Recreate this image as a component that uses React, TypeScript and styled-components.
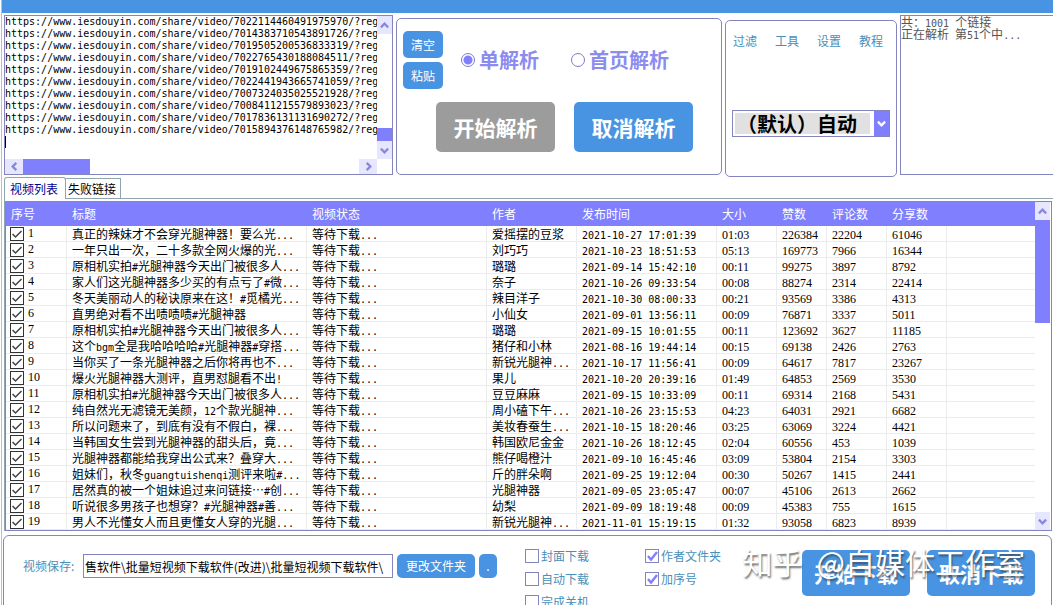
import React from "react";
import styled, { createGlobalStyle, css } from "styled-components";

const blue = "#4894e2";
const violet = "#8080ff";
const edge = "#8585bd";
const link = "#4a8fb8";
const cjk = '"Noto Sans CJK SC", sans-serif';
const mono = '"DejaVu Sans Mono", "Noto Sans CJK SC", monospace';

const GlobalStyle = createGlobalStyle`
  * { box-sizing: border-box; }
  body { margin: 0; background: #fff; color: #000; font: 12px/16px ${cjk}; overflow: hidden; }
  button, input, textarea, select { font-family: inherit; margin: 0; }
`;

const Window = styled.div`
  display: flex;
  flex-direction: column;
  height: 100vh;
  margin-left: 1px;
  border-left: 1px solid #b4bde6;
  overflow: hidden;
`;

const TitleBar = styled.header`
  flex: none;
  height: 13px;
  background: ${blue};
`;

const TopArea = styled.section`
  flex: none;
  display: grid;
  grid-template-columns: minmax(0, 389fr) minmax(0, 326fr) minmax(0, 172fr) minmax(0, 153fr);
  align-items: start;
  gap: 3px;
  padding: 2px 0 0 2px;
`;

const LinkBox = styled.div`
  display: grid;
  grid-template-columns: minmax(0, 1fr) 15px;
  grid-template-rows: 143px 15px;
  position: relative;
  border: 1px solid ${edge};
`;

const LinkText = styled.textarea`
  display: block;
  width: 100%;
  height: 100%;
  padding: 0;
  border: 0;
  outline: 0;
  resize: none;
  overflow: hidden;
  white-space: pre;
  font: 10px/12px ${mono};
  color: #000;
`;

const Caret = styled.span`
  position: absolute;
  left: 0;
  top: 120px;
  width: 1px;
  height: 12px;
  background: #000;
`;

const Track = styled.div<{ $row?: boolean }>`
  display: flex;
  flex-direction: ${(p) => (p.$row ? "row" : "column")};
  background: #fff;
`;

const ArrowButton = styled.button`
  flex: 0 0 18px;
  display: flex;
  align-items: center;
  justify-content: center;
  padding: 0;
  border: 0;
  background: #e6e6ff;
  color: #8888dd;
`;

const Thumb = styled.div<{ $size: number; $end?: boolean }>`
  flex: 0 0 ${(p) => p.$size}px;
  margin-top: ${(p) => (p.$end ? "auto" : 0)};
  background: ${violet};
`;

const Gap = styled.div`
  flex: 1;
`;

const Group = styled.div<{ $top: number }>`
  height: 157px;
  margin-top: ${(p) => p.$top}px;
  padding: 12px 6px;
  border: 1px solid ${edge};
  border-radius: 5px;
`;

const ParseGroup = styled(Group)`
  display: flex;
  flex-direction: column;
  gap: 13px;
`;

const ModeRow = styled.div`
  display: flex;
  align-items: center;
  gap: 18px;
`;

const Stack = styled.div`
  display: flex;
  flex-direction: column;
  gap: 4px;
`;

const Modes = styled.div`
  display: flex;
  gap: 32px;
`;

const ActionRow = styled.div`
  display: flex;
  gap: 19px;
  padding-left: 33px;
`;

const SmallButton = styled.button<{ $w: number; $h: number }>`
  flex: none;
  width: ${(p) => p.$w}px;
  height: ${(p) => p.$h}px;
  padding: 0;
  border: 0;
  border-radius: 5px;
  background: ${blue};
  color: #fff;
  font-size: 12px;
  line-height: 16px;
`;

const BigButton = styled.button<{ $w: number; $h: number; $off?: boolean }>`
  flex: none;
  width: ${(p) => p.$w}px;
  height: ${(p) => p.$h}px;
  padding: 0;
  border: 0;
  border-radius: 5px;
  background: ${(p) => (p.$off ? "#9c9c9c" : blue)};
  color: #fff;
  font-size: 21px;
  font-weight: 700;
  line-height: 24px;
  white-space: nowrap;
`;

const RadioLabel = styled.label`
  display: flex;
  align-items: center;
  gap: 4px;
  font-size: 20px;
  font-weight: 700;
  line-height: 24px;
  color: #8c8cf0;
  white-space: nowrap;
`;

const Radio = styled.input`
  appearance: none;
  flex: none;
  width: 14px;
  height: 14px;
  border: 1px solid #7c7ccc;
  border-radius: 50%;
  &:checked {
    background: radial-gradient(circle, ${violet} 0 4px, #fff 5px);
  }
`;

const ToolGroup = styled(Group)`
  display: flex;
  flex-direction: column;
  gap: 61px;
`;

const Menu = styled.nav`
  display: flex;
  gap: 18px;
  padding-left: 1px;
`;

const MenuLink = styled.a`
  color: ${link};
  text-decoration: none;
  white-space: nowrap;
`;

const Combo = styled.div`
  display: flex;
  height: 27px;
  border: 1px solid ${edge};
`;

const ComboSelect = styled.select`
  appearance: none;
  flex: 1;
  min-width: 0;
  margin: 2px 4px 2px 2px;
  padding: 0 0 0 2px;
  border: 0;
  border-radius: 0;
  background: #e1e1e1;
  color: #000;
  font-size: 20px;
  font-weight: 700;
  line-height: 21px;
`;

const ComboArrow = styled.span`
  flex: 0 0 15px;
  display: flex;
  align-items: center;
  justify-content: center;
  background: ${violet};
  color: #fff;
`;

const Log = styled.div`
  height: 160px;
  border: 1px solid ${edge};
  border-right: 0;
  line-height: 12px;
  color: #555;
  white-space: nowrap;
`;

const LogLine = styled.p`
  margin: 0;
`;

const Tabs = styled.div`
  flex: none;
  display: flex;
  align-items: flex-end;
  padding-left: 2px;
`;

const Tab = styled.button<{ $active?: boolean }>`
  padding: 0 4px 0 2px;
  height: 20px;
  border: 1px solid #8fa5b2;
  border-bottom: 0;
  border-left-width: 0;
  background: #fff;
  color: #000;
  font-size: 12px;
  line-height: 16px;
  ${(p) =>
    p.$active &&
    css`
      height: 22px;
      padding: 0 7px 0 5px;
      margin-bottom: -1px;
      border-left-width: 1px;
      border-radius: 3px 3px 0 0;
      color: #000090;
      z-index: 1;
    `}
`;

const TabPage = styled.section`
  flex: none;
  margin-left: 2px;
  padding-top: 2px;
  border: solid #8fa5b2;
  border-width: 1px 0 0 1px;
`;

const ListBox = styled.div`
  display: grid;
  grid-template-columns: minmax(0, 1fr) 15px;
  margin-right: 1px;
  padding-right: 1px;
  border: 1px solid ${edge};
`;

const Table = styled.table`
  width: 100%;
  table-layout: fixed;
  border-collapse: separate;
  border-spacing: 0;
`;

const Th = styled.th`
  height: 24px;
  padding: 0 0 0 5px;
  background: ${violet};
  color: #fff;
  font-weight: 400;
  text-align: left;
  line-height: 16px;
  white-space: nowrap;
`;

const Td = styled.td`
  height: 16px;
  padding: 0 0 0 5px;
  border: solid #ececec;
  border-width: 0 1px 1px 0;
  line-height: 15px;
  white-space: nowrap;
  overflow: hidden;
  &:last-child { border-right: 0; }
`;

const Half = styled.span`
  font: 10px/1px ${mono};
`;

const Digits = styled.span`
  font: 12px/1px "Liberation Serif", serif;
`;

const RowLabel = styled.label`
  display: flex;
  align-items: center;
  gap: 4px;
  margin-left: -1px;
  height: 15px;
`;

const tick = (p: { $dark?: boolean }) => (p.$dark ? "#444444" : violet);

const CheckWrap = styled.span<{ $size: number; $dark?: boolean }>`
  flex: none;
  display: grid;
  width: ${(p) => p.$size}px;
  height: ${(p) => p.$size}px;
  color: ${tick};
  > * { grid-area: 1 / 1; width: 100%; height: 100%; }
  svg { pointer-events: none; z-index: 1; visibility: hidden; }
  input:checked + svg { visibility: visible; }
`;

const CheckInput = styled.input<{ $dark?: boolean }>`
  appearance: none;
  border: 1px solid ${(p) => (p.$dark ? "#333" : edge)};
  background: #fff;
`;

const Footer = styled.footer`
  flex: 1 0 auto;
  display: flex;
  align-items: flex-start;
  position: relative;
  height: 100px;
  margin: 4px 1px 0;
  padding: 13px 16px 0 19px;
  border: 1px solid ${edge};
  border-radius: 6px;
`;

const SaveRow = styled.div`
  display: flex;
  align-items: center;
  gap: 4px;
  padding-top: 5px;
`;

const SaveLabel = styled.label`
  width: 56px;
  color: ${link};
  white-space: nowrap;
`;

const PathInput = styled.input`
  width: 310px;
  height: 24px;
  padding: 0 1px;
  border: 1px solid ${edge};
  outline: 0;
  color: #000;
  font-size: 12px;
`;

const Options = styled.div`
  display: grid;
  grid-template-columns: 120px auto;
  grid-auto-rows: 14px;
  gap: 9px 0;
  margin-left: 28px;
`;

const OptionLabel = styled.label`
  display: flex;
  align-items: center;
  gap: 2px;
  color: ${link};
  white-space: nowrap;
`;

const Downloads = styled.div`
  display: flex;
  gap: 17px;
  margin-left: auto;
  padding-top: 1px;
`;

const Watermark = styled.span`
  position: absolute;
  right: 26px;
  top: 3px;
  display: flex;
  gap: 14px;
  font-size: 30px;
  line-height: 44px;
  color: #fff;
  text-shadow: 1px 2px 2px rgba(60, 60, 60, 0.75);
  white-space: nowrap;
  pointer-events: none;
`;

const chevrons = {
  up: "M1 7 5 3 9 7",
  down: "M1 3 5 7 9 3",
  left: "M7 1 3 5 7 9",
  right: "M3 1 7 5 3 9",
};

function Chevron({ dir }: { dir: keyof typeof chevrons }) {
  return (
    <svg width="9" height="9" viewBox="0 0 10 10" fill="none" stroke="currentColor" strokeWidth="2.6" aria-hidden="true">
      <path d={chevrons[dir]} />
    </svg>
  );
}

function Arrow({ dir, label }: { dir: keyof typeof chevrons; label: string }) {
  return (
    <ArrowButton type="button" aria-label={label}>
      <Chevron dir={dir} />
    </ArrowButton>
  );
}

function Check({ size, checked, dark, label }: { size: number; checked?: boolean; dark?: boolean; label?: string }) {
  return (
    <CheckWrap $size={size} $dark={dark}>
      <CheckInput type="checkbox" defaultChecked={checked} $dark={dark} aria-label={label} />
      <svg viewBox="0 0 14 14" fill="none" stroke="currentColor" strokeWidth={dark ? 1.5 : 2.4} aria-hidden="true">
        <path d={dark ? "M2.5 7 5.5 10 11.5 4" : "M3 7 6 10.5 12 3"} />
      </svg>
    </CheckWrap>
  );
}

/* Half-width characters take six pixels, full-width ones twelve. */
function Mixed({ text }: { text: string }) {
  return (
    <>
      {text.split(/([\x20-\x7e]+)/).map((part, i) => (i % 2 ? <Half key={i}>{part}</Half> : part))}
    </>
  );
}

const links = [
  "7022114460491975970", "7014383710543891726", "7019505200536833319", "7022765430188084511", "7019102449675865359",
  "7022441943665741059", "7007324035025521928", "7008411215579893023", "7017836131131690272", "7015894376148765982",
].map((id) => `https://www.iesdouyin.com/share/video/${id}/?reg`).join("\n");

const columns: [string, number | undefined][] = [
  ["序号", 61], ["标题", 240], ["视频状态", 180], ["作者", 90], ["发布时间", 140],
  ["大小", 60], ["赞数", 50], ["评论数", 60], ["分享数", 60], ["", undefined],
];

const rows: string[][] = [
  ["真正的辣妹才不会穿光腿神器！要么光...", "爱摇摆的豆浆", "2021-10-27 17:01:39", "01:03", "226384", "22204", "61046"],
  ["一年只出一次，二十多款全网火爆的光...", "刘巧巧", "2021-10-23 18:51:53", "05:13", "169773", "7966", "16344"],
  ["原相机实拍#光腿神器今天出门被很多人...", "璐璐", "2021-09-14 15:42:10", "00:11", "99275", "3897", "8792"],
  ["家人们这光腿神器多少买的有点亏了#微...", "奈子", "2021-10-26 09:33:54", "00:08", "88274", "2314", "22414"],
  ["冬天美丽动人的秘诀原来在这！#觅橘光...", "辣目洋子", "2021-10-30 08:00:33", "00:21", "93569", "3386", "4313"],
  ["直男绝对看不出啧啧啧#光腿神器", "小仙女", "2021-09-01 13:56:11", "00:09", "76871", "3337", "5011"],
  ["原相机实拍#光腿神器今天出门被很多人...", "璐璐", "2021-09-15 10:01:55", "00:11", "123692", "3627", "11185"],
  ["这个bgm全是我哈哈哈哈#光腿神器#穿搭...", "猪仔和小林", "2021-08-16 19:44:14", "00:15", "69138", "2426", "2763"],
  ["当你买了一条光腿神器之后你将再也不...", "新锐光腿神...", "2021-10-17 11:56:41", "00:09", "64617", "7817", "23267"],
  ["爆火光腿神器大测评，直男怼腿看不出!", "果儿", "2021-10-20 20:39:16", "01:49", "64853", "2569", "3530"],
  ["原相机实拍#光腿神器今天出门被很多人...", "豆豆麻麻", "2021-09-15 10:33:09", "00:11", "69314", "2168", "5431"],
  ["纯自然光无滤镜无美颜，12个款光腿神...", "周小磕下午...", "2021-10-26 23:15:53", "04:23", "64031", "2921", "6682"],
  ["所以问题来了，到底有没有不假白，裸...", "美妆春蚕生...", "2021-10-15 18:20:46", "03:25", "63069", "3224", "4421"],
  ["当韩国女生尝到光腿神器的甜头后，竟...", "韩国欧尼金金", "2021-10-26 18:12:45", "02:04", "60556", "453", "1039"],
  ["光腿神器都能给我穿出公式来？叠穿大...", "熊仔喝橙汁", "2021-09-10 16:45:46", "03:09", "53804", "2154", "3303"],
  ["姐妹们，秋冬guangtuishenqi测评来啦#...", "斤的胖朵啊", "2021-09-25 19:12:04", "00:30", "50267", "1415", "2441"],
  ["居然真的被一个姐妹追过来问链接…#创...", "光腿神器", "2021-09-05 23:05:47", "00:07", "45106", "2613", "2662"],
  ["听说很多男孩子也想穿？#光腿神器#善...", "幼梨", "2021-09-09 18:19:48", "00:09", "45383", "755", "1615"],
  ["男人不光懂女人而且更懂女人穿的光腿...", "新锐光腿神...", "2021-11-01 15:19:15", "01:32", "93058", "6823", "8939"],
];

function VideoRow({ index, row }: { index: number; row: string[] }) {
  const [title, author, date, ...numbers] = row;
  return (
    <tr>
      <Td>
        <RowLabel>
          <Check size={14} checked dark />
          <Digits>{index}</Digits>
        </RowLabel>
      </Td>
      <Td><Mixed text={title} /></Td>
      <Td><Mixed text="等待下载..." /></Td>
      <Td><Mixed text={author} /></Td>
      <Td><Mixed text={date} /></Td>
      {numbers.map((n, i) => (
        <Td key={i}><Digits>{n}</Digits></Td>
      ))}
      <Td />
    </tr>
  );
}

function Option({ text, checked }: { text: string; checked?: boolean }) {
  return (
    <OptionLabel>
      <Check size={14} checked={checked} />
      {text}
    </OptionLabel>
  );
}

export default function App() {
  return (
    <>
      <GlobalStyle />
      <Window>
        <TitleBar />
        <TopArea>
          <LinkBox>
            <LinkText aria-label="链接" defaultValue={links} wrap="off" spellCheck={false} />
            <Track>
              <Arrow dir="up" label="向上" />
              <Thumb $size={13} $end />
              <Arrow dir="down" label="向下" />
            </Track>
            <Track $row>
              <Arrow dir="left" label="向左" />
              <Thumb $size={67} />
              <Gap />
              <Arrow dir="right" label="向右" />
            </Track>
            <Caret />
          </LinkBox>

          <ParseGroup $top={3}>
            <ModeRow>
              <Stack>
                <SmallButton type="button" $w={40} $h={27}>清空</SmallButton>
                <SmallButton type="button" $w={40} $h={27}>粘贴</SmallButton>
              </Stack>
              <Modes>
                <RadioLabel><Radio type="radio" name="mode" defaultChecked />单解析</RadioLabel>
                <RadioLabel><Radio type="radio" name="mode" />首页解析</RadioLabel>
              </Modes>
            </ModeRow>
            <ActionRow>
              <BigButton type="button" $w={119} $h={50} $off>开始解析</BigButton>
              <BigButton type="button" $w={119} $h={50}>取消解析</BigButton>
            </ActionRow>
          </ParseGroup>

          <ToolGroup $top={5}>
            <Menu>
              {["过滤", "工具", "设置", "教程"].map((t) => (
                <MenuLink key={t} href="#">{t}</MenuLink>
              ))}
            </Menu>
            <Combo>
              <ComboSelect aria-label="线路">
                <option>（默认）自动</option>
              </ComboSelect>
              <ComboArrow><Chevron dir="down" /></ComboArrow>
            </Combo>
          </ToolGroup>

          <Log>
            <LogLine><Mixed text="共：1001 个链接" /></LogLine>
            <LogLine><Mixed text="正在解析 第51个中..." /></LogLine>
          </Log>
        </TopArea>

        <Tabs>
          <Tab type="button" $active>视频列表</Tab>
          <Tab type="button">失败链接</Tab>
        </Tabs>
        <TabPage>
          <ListBox>
            <Table>
              <colgroup>
                {columns.map(([, width], i) => (
                  <col key={i} width={width} />
                ))}
              </colgroup>
              <thead>
                <tr>
                  {columns.map(([name], i) => (
                    <Th key={i} scope="col">{name}</Th>
                  ))}
                </tr>
              </thead>
              <tbody>
                {rows.map((row, i) => (
                  <VideoRow key={i} index={i + 1} row={row} />
                ))}
              </tbody>
            </Table>
            <Track>
              <Arrow dir="up" label="列表向上" />
              <Thumb $size={103} />
              <Gap />
              <Arrow dir="down" label="列表向下" />
            </Track>
          </ListBox>
        </TabPage>

        <Footer>
          <SaveRow>
            <SaveLabel htmlFor="path">视频保存:</SaveLabel>
            <PathInput id="path" defaultValue="售软件\批量短视频下载软件(改进)\批量短视频下载软件\" />
            <SmallButton type="button" $w={78} $h={24}>更改文件夹</SmallButton>
            <SmallButton type="button" $w={18} $h={24}>.</SmallButton>
          </SaveRow>
          <Options>
            <Option text="封面下载" />
            <Option text="作者文件夹" checked />
            <Option text="自动下载" />
            <Option text="加序号" checked />
            <Option text="完成关机" />
          </Options>
          <Downloads>
            <BigButton type="button" $w={108} $h={46}>开始下载</BigButton>
            <BigButton type="button" $w={108} $h={46}>取消下载</BigButton>
          </Downloads>
          <Watermark>
            <span>知乎</span>
            <span>@自媒体工作室</span>
          </Watermark>
        </Footer>
      </Window>
    </>
  );
}
